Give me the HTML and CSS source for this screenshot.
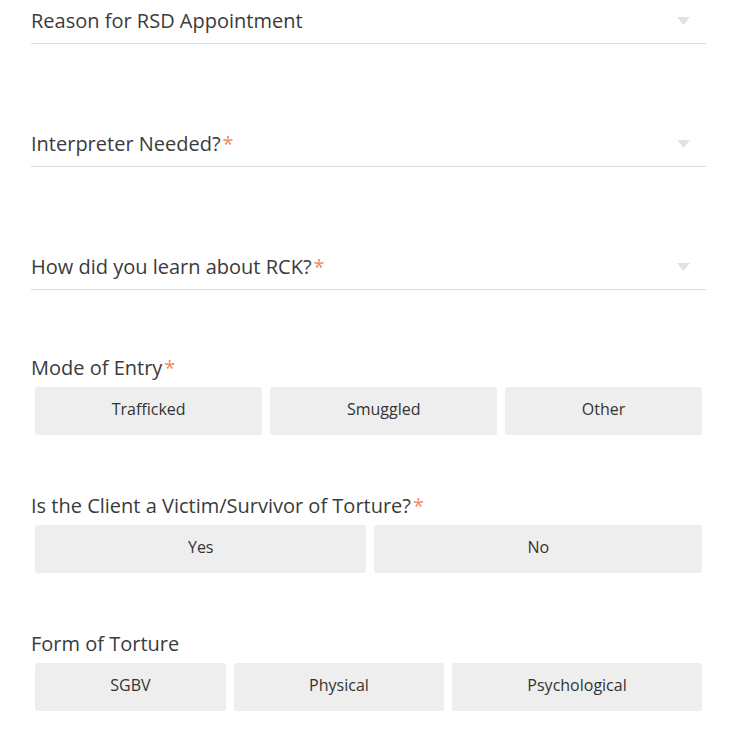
FILE: index.html
```html
<!DOCTYPE html>
<html>
<head>
<meta charset="utf-8">
<link rel="stylesheet" href="styles.css">
</head>
<body>
<form class="form">
  <div class="select">
    <span class="select-label">Reason for RSD Appointment</span>
    <svg class="arrow" width="13" height="8" viewBox="0 0 13 8"><polygon points="0,0 13,0 6.5,8" /></svg>
  </div>
  <div class="select">
    <span class="select-label">Interpreter Needed?<span class="req">*</span></span>
    <svg class="arrow" width="13" height="8" viewBox="0 0 13 8"><polygon points="0,0 13,0 6.5,8" /></svg>
  </div>
  <div class="select">
    <span class="select-label">How did you learn about RCK?<span class="req">*</span></span>
    <svg class="arrow" width="13" height="8" viewBox="0 0 13 8"><polygon points="0,0 13,0 6.5,8" /></svg>
  </div>

  <div class="group first">
    <div class="group-label">Mode of Entry<span class="req">*</span></div>
    <div class="choices">
      <button type="button" class="choice">Trafficked</button>
      <button type="button" class="choice">Smuggled</button>
      <button type="button" class="choice">Other</button>
    </div>
  </div>

  <div class="group">
    <div class="group-label">Is the Client a Victim/Survivor of Torture?<span class="req">*</span></div>
    <div class="choices">
      <button type="button" class="choice">Yes</button>
      <button type="button" class="choice">No</button>
    </div>
  </div>

  <div class="group">
    <div class="group-label">Form of Torture</div>
    <div class="choices">
      <button type="button" class="choice">SGBV</button>
      <button type="button" class="choice">Physical</button>
      <button type="button" class="choice">Psychological</button>
    </div>
  </div>
</form>
</body>
</html>
```

FILE: styles.css
```css
html, body {
  margin: 0;
  padding: 0;
  background: #ffffff;
}

body {
  font-family: "Open Sans", "Noto Sans", sans-serif;
  color: #3b3b3b;
}

.form {
  width: 675px;
  margin-left: 31px;
}

.select {
  display: flex;
  align-items: center;
  justify-content: space-between;
  padding: 7px 0 9px 0;
  border-bottom: 1px solid #dddddd;
  margin-bottom: 79px;
}

.select-label {
  font-size: 20px;
  line-height: 27px;
}

.req {
  color: #f08a63;
  margin-left: 2px;
}

.arrow {
  fill: #e2e2e2;
  margin-right: 16px;
  margin-top: 1px;
}

.group.first {
  margin-top: -13px;
}

.group {
  margin-top: 55px;
}

.group-label {
  font-size: 20px;
  line-height: 23px;
  padding-bottom: 4px;
}

.choices {
  display: flex;
}

.choice {
  flex: 1 1 auto;
  margin: 4px;
  height: 48px;
  padding: 0 20px 4px 20px;
  border: none;
  border-radius: 3px;
  background: #eeeeee;
  box-shadow: 0 0 1px rgba(0, 0, 0, 0.06);
  font-family: "Open Sans", "Noto Sans", sans-serif;
  font-size: 16px;
  color: #333333;
  cursor: pointer;
}
```
